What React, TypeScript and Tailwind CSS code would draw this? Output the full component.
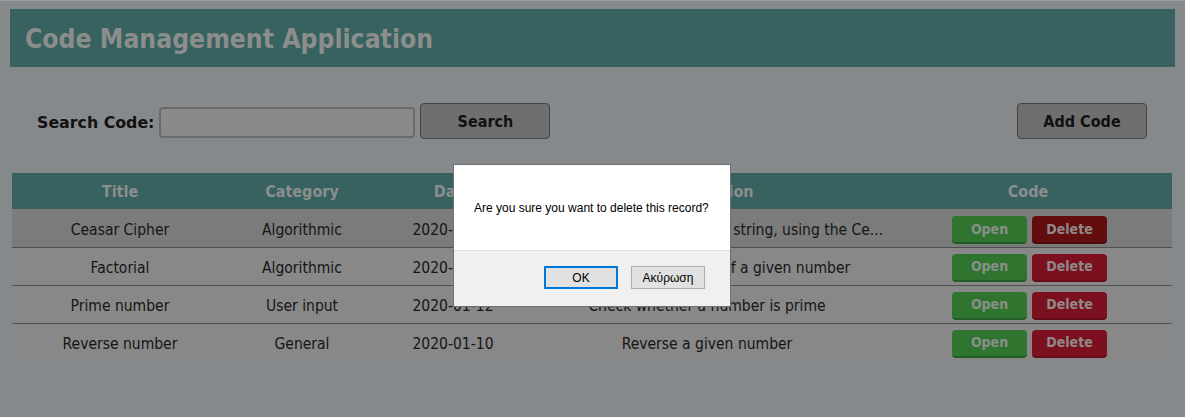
import React from "react";

const rows = [
  { t: "Ceasar Cipher", c: "Algorithmic", d: "2020-01-15", desc: "Encrypt and decrypt a given string, using the Ce...", hover: true },
  { t: "Factorial", c: "Algorithmic", d: "2020-01-14", desc: "Calculate the factorial of a given number" },
  { t: "Prime number", c: "User input", d: "2020-01-12", desc: "Check whether a number is prime" },
  { t: "Reverse number", c: "General", d: "2020-01-10", desc: "Reverse a given number" },
];

const cond = { fontFamily: "'DejaVu Sans Condensed', 'DejaVu Sans', sans-serif", fontStretch: "condensed" } as React.CSSProperties;
const norm = { fontFamily: "'DejaVu Sans', sans-serif", fontStretch: "normal" } as React.CSSProperties;

export default function App() {
  return (
    <div className="relative w-[1185px] h-[417px] bg-[#86898b] overflow-hidden" style={cond}>
      <div className="h-px bg-[#9a9c9e]" />
      <div className="px-[10px] pt-[8px]">
        <div className="h-[58px] bg-[#37625f] flex items-center pl-[15px] pt-[3px]">
          <h1 className="text-[26.3px] font-bold text-[#8b8e8d]">Code Management Application</h1>
        </div>
      </div>

      <div className="flex items-center justify-between pl-[37px] pr-[38px] mt-[36px] h-[36px]">
        <div className="flex items-center">
          <span className="text-[15.8px] font-bold text-[#111] mr-[5px] pt-[3px]" style={norm}>Search Code:</span>
          <input className="w-[256px] h-[31px] bg-[#8a8a8a] border-2 border-[#6a6a6a] rounded-[4px] mr-[5px] mt-[3px]" />
          <button className="w-[130px] h-[36px] bg-[#6f6f6f] border border-[#444] rounded-[4px] text-[16px] font-bold text-[#111] pt-[2px]">Search</button>
        </div>
        <button className="w-[130px] h-[36px] bg-[#6f6f6f] border border-[#444] rounded-[4px] text-[16px] font-bold text-[#111] pt-[2px]">Add Code</button>
      </div>

      <div className="px-[12px] mt-[34px]">
        <table className="w-[1160px] border-collapse text-[15.5px] text-[#151515]">
          <thead>
            <tr className="bg-[#37625f] h-[36px] text-[#8b8e8d] text-[16px]">
              <th className="w-[216px] font-bold pt-[2px]">Title</th>
              <th className="w-[148px] font-bold pt-[2px]">Category</th>
              <th className="w-[154px] font-bold pt-[2px]">Date</th>
              <th className="w-[354px] font-bold pt-[2px]">Description</th>
              <th className="font-bold pt-[2px]">Code</th>
            </tr>
          </thead>
          <tbody>
            {rows.map((r, i) => (
              <tr key={i} className={`h-[38px] ${i > 0 ? "border-t border-[#505050]" : ""} ${r.hover ? "bg-[#7b7b7b]" : "bg-[#888888]"}`}>
                <td className="text-center pt-[5px] pb-0 px-0">{r.t}</td>
                <td className="text-center pt-[5px] pb-0 px-0">{r.c}</td>
                <td className="text-center pt-[5px] pb-0 px-0">{r.d}</td>
                <td className="text-center pt-[5px] pb-0 px-0 whitespace-nowrap">{r.desc}</td>
                <td className={`text-center align-top pb-0 px-0 ${i === 0 ? "pt-[7px]" : "pt-[6px]"}`}>
                  <div className="flex justify-center gap-[5px] pl-[3px]">
                    <button className="w-[75px] h-[28px] bg-[#2f7530] border-b-2 border-[#235c24] rounded-[4px] text-[14px] font-bold text-[#8a8f8a]">Open</button>
                    <button className={`w-[75px] h-[28px] ${r.hover ? "bg-[#630d0e] border-[#4e0a0b]" : "bg-[#7d101f] border-[#640c18]"} border-b-2 rounded-[4px] text-[14px] font-bold text-[#8f8a8a]`}>Delete</button>
                  </div>
                </td>
              </tr>
            ))}
          </tbody>
        </table>
      </div>

      <div
        className="absolute left-[453px] top-[164px] w-[278px] h-[143px] border border-[#707070] bg-white flex flex-col"
        style={{ fontFamily: "'Liberation Sans', Arial, sans-serif", fontStretch: "normal" }}
      >
        <div className="h-[86px] flex items-center pl-[20px] text-[12px] text-black border-b border-[#dfdfdf]">
          Are you sure you want to delete this record?
        </div>
        <div className="flex-1 bg-[#f0f0f0] flex justify-end items-start pt-[15px] pr-[25px] gap-[13px]">
          <button className="w-[74px] h-[23px] bg-[#e1e1e1] border-2 border-[#0078d7] text-[12px] text-black">OK</button>
          <button className="w-[74px] h-[23px] bg-[#e1e1e1] border border-[#adadad] text-[12px] text-black">Ακύρωση</button>
        </div>
      </div>
    </div>
  );
}
